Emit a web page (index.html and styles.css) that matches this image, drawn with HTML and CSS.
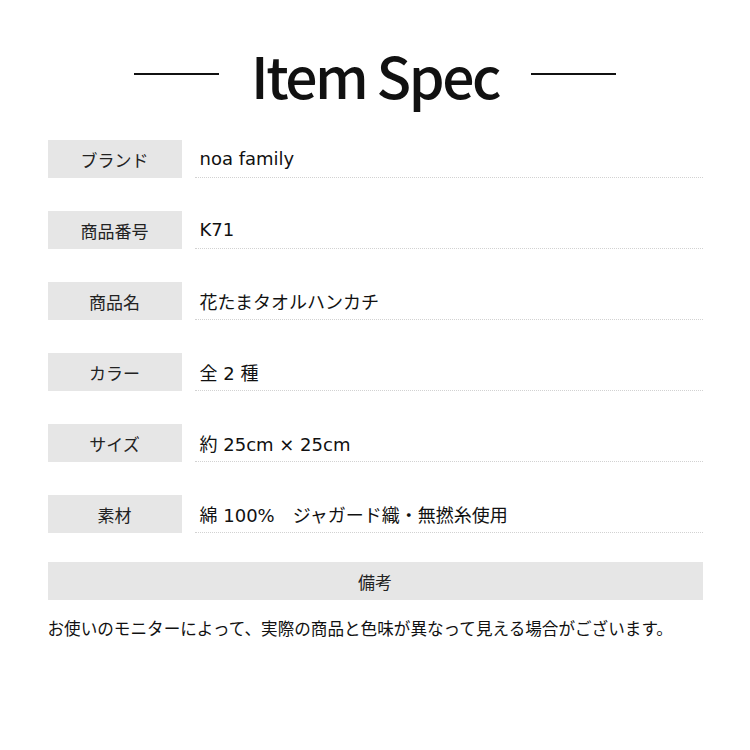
FILE: index.html
```html
<!DOCTYPE html>
<html lang="ja">
<head>
<meta charset="utf-8">
<title>Item Spec</title>
<link rel="stylesheet" href="styles.css">
</head>
<body>
<div class="page">
  <header class="head">
    <span class="rule"></span>
    <h1 class="title">Item Spec</h1>
    <span class="rule"></span>
  </header>
  <div class="specs">
    <div class="row"><div class="label">ブランド</div><div class="value">noa family</div></div>
    <div class="row"><div class="label">商品番号</div><div class="value">K71</div></div>
    <div class="row"><div class="label">商品名</div><div class="value">花たまタオルハンカチ</div></div>
    <div class="row"><div class="label">カラー</div><div class="value">全 2 種</div></div>
    <div class="row"><div class="label">サイズ</div><div class="value">約 25cm × 25cm</div></div>
    <div class="row"><div class="label">素材</div><div class="value">綿 100%　ジャガード織・無撚糸使用</div></div>
  </div>
  <div class="note-head">備考</div>
  <p class="note">お使いのモニターによって、実際の商品と色味が異なって見える場合がございます。</p>
</div>
</body>
</html>
```
FILE: styles.css
```css
html, body {
  margin: 0;
  padding: 0;
  background: #fff;
}
body {
  font-family: "Noto Sans CJK JP", "Noto Sans", sans-serif;
  color: #111;
}
.page {
  width: 655px;
  margin: 0 auto;
  padding-top: 38px;
}
.head {
  display: flex;
  align-items: center;
  justify-content: center;
  gap: 32px;
  height: 72px;
}
.rule {
  width: 85px;
  height: 2px;
  background: #111;
}
.title {
  margin: 0;
  font-weight: 500;
  font-size: 57px;
  line-height: 72px;
  letter-spacing: -2.5px;
  color: #111;
}
.specs {
  margin-top: 30px;
  display: flex;
  flex-direction: column;
  gap: 33px;
}
.row {
  display: grid;
  grid-template-columns: 134px 1fr;
  column-gap: 13px;
  height: 38px;
}
.label {
  background: #e6e6e6;
  display: flex;
  align-items: center;
  justify-content: center;
  font-size: 17px;
  color: #222;
}
.value {
  display: flex;
  align-items: center;
  padding-left: 5px;
  font-family: "DejaVu Sans", "Noto Sans CJK JP", sans-serif;
  font-size: 18px;
  color: #111;
  border-bottom: 1px dotted #d2d2d2;
}
.note-head {
  margin-top: 29px;
  height: 38px;
  background: #e6e6e6;
  display: flex;
  align-items: center;
  justify-content: center;
  font-size: 17px;
  color: #222;
}
.note {
  margin: 17px 0 0;
  font-size: 16.6px;
  line-height: 22px;
  color: #111;
}
```
